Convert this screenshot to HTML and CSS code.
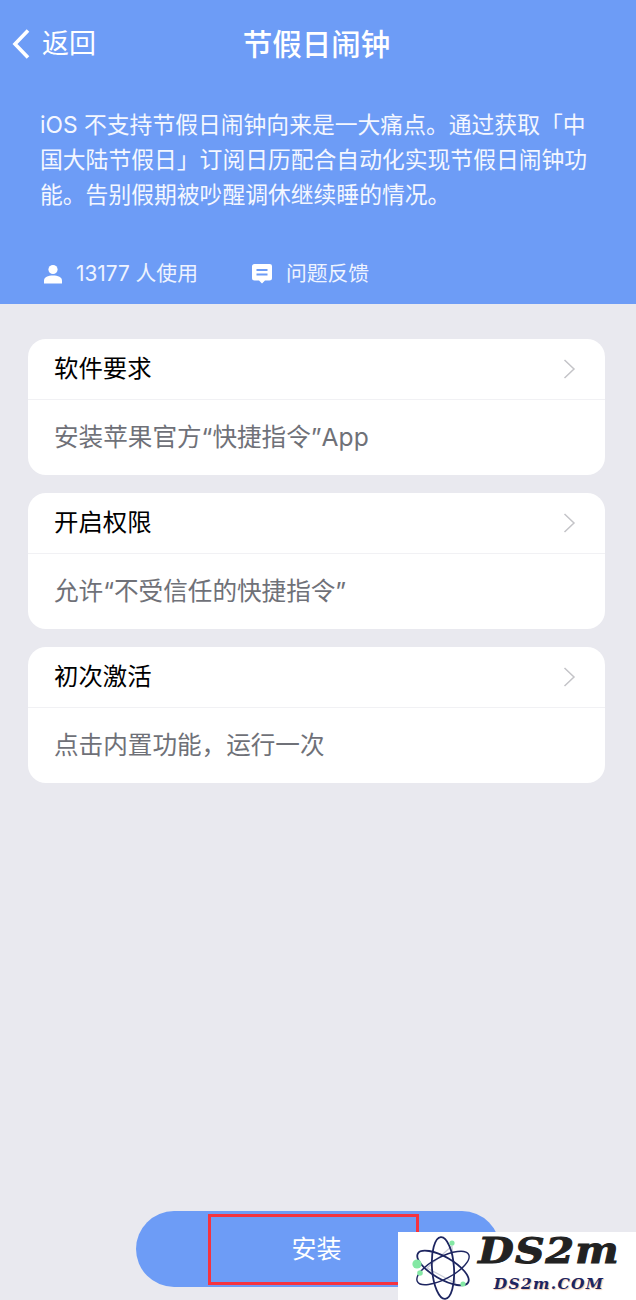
FILE: index.html
```html
<!DOCTYPE html>
<html lang="zh-CN">
<head>
  <meta charset="UTF-8" />
  <meta name="viewport" content="width=device-width, initial-scale=1.0"/>
  <title>节假日闹钟</title>
  <link rel="stylesheet" href="styles.css">
</head>
<body>

  <div class="header">
    <div class="navbar">
      <a class="back" href="#">
        <svg class="back-icon" width="20" height="32" viewBox="0 0 20 32">
          <path d="M17 2.5 L4 16 L17 29.5" fill="none" stroke="#fff" stroke-width="3.6"/>
        </svg>
        <span>返回</span>
      </a>
      <div class="title">节假日闹钟</div>
    </div>
    <p class="intro">iOS 不支持节假日闹钟向来是一大痛点。通过获取「中国大陆节假日」订阅日历配合自动化实现节假日闹钟功能。告别假期被吵醒调休继续睡的情况。</p>
    <div class="stats">
      <div class="stat stat-users">
        <svg width="20" height="20" viewBox="0 0 20 20">
          <circle cx="10" cy="5.5" r="4.6" fill="#fff"/>
          <path d="M1 19.5 V16.5 C1 13 5 11.4 10 11.4 C15 11.4 19 13 19 16.5 V19.5 Z" fill="#fff"/>
        </svg>
        <span>13177 人使用</span>
      </div>
      <div class="stat">
        <svg width="22" height="22" viewBox="0 0 22 22">
          <path d="M3.5 1 H18.5 A2.5 2.5 0 0 1 21 3.5 V15 A2.5 2.5 0 0 1 18.5 17.5 H14 L11 20.5 L8 17.5 H3.5 A2.5 2.5 0 0 1 1 15 V3.5 A2.5 2.5 0 0 1 3.5 1 Z" fill="#fff"/>
          <rect x="5.5" y="6" width="11" height="2" fill="#6d9cf6"/>
          <rect x="5.5" y="10.5" width="11" height="2" fill="#6d9cf6"/>
        </svg>
        <span>问题反馈</span>
      </div>
    </div>
  </div>

  <div class="steps">
    <div class="step-card">
      <div class="step-head">
        <span>软件要求</span>
        <svg class="chevron" width="13" height="20" viewBox="0 0 13 20"><path d="M1.5 1 L11 10 L1.5 19" fill="none" stroke="#c4c4c8" stroke-width="1.5"/></svg>
      </div>
      <div class="step-body">安装苹果官方“快捷指令”App</div>
    </div>
    <div class="step-card">
      <div class="step-head">
        <span>开启权限</span>
        <svg class="chevron" width="13" height="20" viewBox="0 0 13 20"><path d="M1.5 1 L11 10 L1.5 19" fill="none" stroke="#c4c4c8" stroke-width="1.5"/></svg>
      </div>
      <div class="step-body">允许“不受信任的快捷指令”</div>
    </div>
    <div class="step-card">
      <div class="step-head">
        <span>初次激活</span>
        <svg class="chevron" width="13" height="20" viewBox="0 0 13 20"><path d="M1.5 1 L11 10 L1.5 19" fill="none" stroke="#c4c4c8" stroke-width="1.5"/></svg>
      </div>
      <div class="step-body">点击内置功能，运行一次</div>
    </div>
  </div>

  <div class="footer">
    <button class="install">安装</button>
  </div>

  <!-- red highlight drawn over the button -->
  <div class="highlight"></div>

  <!-- site stamp in the corner -->
  <div class="stamp">
    <svg class="stamp-logo" width="74" height="68" viewBox="0 0 74 68">
      <path d="M22 36 L47 14 L50 51 Z" fill="none" stroke="#c9ccd8" stroke-width="1.2"/>
      <g fill="none" stroke="#1d2560">
        <ellipse cx="38" cy="36" rx="31" ry="11" transform="rotate(86 38 36)" stroke-width="1.8"/>
        <ellipse cx="38" cy="36" rx="29" ry="11" transform="rotate(30 38 36)" stroke-width="1.8"/>
        <ellipse cx="38" cy="36" rx="29" ry="11" transform="rotate(-28 38 36)" stroke-width="1.4"/>
      </g>
      <circle cx="12" cy="32" r="4.6" fill="#84e8a4"/>
      <circle cx="15" cy="41" r="2.8" fill="#84e8a4"/>
      <circle cx="47" cy="11" r="2.6" fill="#84e8a4"/>
      <circle cx="58" cy="52" r="2.6" fill="#84e8a4"/>
    </svg>
    <div class="stamp-text">
      <div class="stamp-name">DS2m</div>
      <div class="stamp-url">DS2m.COM</div>
    </div>
  </div>

</body>
</html>
```

FILE: styles.css
```css
body {
  font-family: Inter, "Noto Sans CJK SC", sans-serif;
  margin: 0;
  padding: 0;
  height: 1300px;
  position: relative;
  overflow: hidden;
  display: flex;
  flex-direction: column;
  background-color: #e9e9ef;
}

.header {
  height: 304px;
  box-sizing: border-box;
  background-color: #6d9cf6;
  color: #fff;
  padding-top: 22px;
}

.navbar {
  display: flex;
  align-items: center;
  justify-content: center;
  height: 44px;
  position: relative;
}

.back {
  position: absolute;
  left: 11px;
  top: 6px;
  display: flex;
  align-items: center;
  gap: 11px;
  color: #fff;
  text-decoration: none;
  font-size: 27px;
  line-height: 32px;
}

.title {
  font-size: 29.5px;
  font-weight: 500;
  line-height: 44px;
  margin-left: -3px;
}

.intro {
  margin: 41px 40px 0 40px;
  font-size: 22.8px;
  line-height: 35px;
  color: #f4f7ff;
}

.stats {
  display: flex;
  gap: 53px;
  margin-top: 48px;
  padding-left: 43px;
  font-size: 20.8px;
  line-height: 28px;
  color: #eef3ff;
}

.stat {
  display: flex;
  align-items: center;
  gap: 13px;
}

.steps {
  display: flex;
  flex-direction: column;
  gap: 18px;
  padding: 35px 31px 0 28px;
}

.step-card {
  background-color: #fff;
  border-radius: 18px;
  height: 136px;
}

.step-head {
  display: flex;
  justify-content: space-between;
  align-items: center;
  height: 60px;
  padding: 0 29px 0 26px;
  border-bottom: 1px solid #f1f1f4;
  font-size: 24.4px;
  color: #000;
}

.step-head span {
  margin-bottom: 5px;
}

.step-body {
  padding: 20px 26px 0;
  font-size: 24.6px;
  line-height: 34px;
  color: #6f7178;
}

.footer {
  position: absolute;
  left: 136px;
  top: 1211px;
}

.install {
  display: block;
  width: 364px;
  height: 76px;
  border: none;
  border-radius: 38px;
  background-color: #6d9cf6;
  color: #fff;
  font-family: inherit;
  font-size: 25px;
  padding: 0 0 5px 0;
  text-indent: -3px;
}

.highlight {
  position: absolute;
  left: 208px;
  top: 1214px;
  width: 205px;
  height: 65px;
  border: 3px solid #f5333f;
}

.stamp {
  position: absolute;
  left: 398px;
  top: 1232px;
  width: 238px;
  height: 68px;
  background-color: #fff;
  display: flex;
}

.stamp-logo {
  margin-left: 7px;
  flex-shrink: 0;
}

.stamp-text {
  width: 140px;
  text-align: center;
}

.stamp-name {
  font-family: "DejaVu Serif", serif;
  font-size: 35px;
  font-weight: bold;
  font-style: italic;
  line-height: 38px;
  letter-spacing: 1px;
  color: #222;
  -webkit-text-stroke: 1px #222;
  transform: scaleX(1.17);
}

.stamp-url {
  font-family: "DejaVu Serif", serif;
  font-size: 15.5px;
  font-weight: bold;
  font-style: italic;
  line-height: 22px;
  margin-top: 3px;
  letter-spacing: 1.3px;
  color: #1d2560;
  text-shadow: 1px 1px 1px #f0c8b0;
}
```
